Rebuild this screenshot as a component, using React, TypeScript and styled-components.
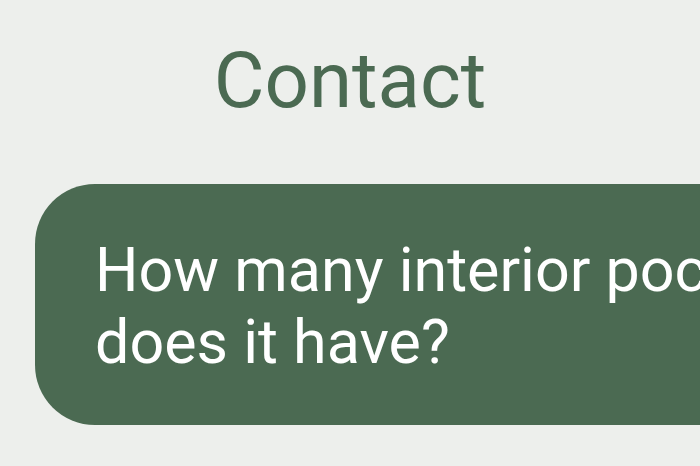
import React from 'react'
import styled, { createGlobalStyle } from 'styled-components'

const GlobalStyle = createGlobalStyle`
  html, body {
    margin: 0;
    padding: 0;
    background: #edefec;
    overflow: hidden;
  }
  body {
    font-family: Roboto, "Liberation Sans", sans-serif;
  }
`

const Page = styled.div`
  width: 700px;
  height: 466px;
  display: flex;
  flex-direction: column;
  overflow: hidden;
`

const Title = styled.h1`
  margin: 0;
  padding-top: 36px;
  text-align: center;
  font-size: 78px;
  font-weight: 400;
  line-height: 90px;
  color: #4b6a52;
`

const Bubble = styled.div`
  margin: 58px 0 0 35px;
  width: 900px;
  flex-shrink: 0;
  box-sizing: border-box;
  padding: 50px 60px 47px 60px;
  border-radius: 60px;
  background: #4b6a52;
  color: #ffffff;
  font-size: 61px;
  line-height: 72px;
`

export default function App() {
  return (
    <Page>
      <GlobalStyle />
      <Title>Contact</Title>
      <Bubble>How many interior pockets does it have?</Bubble>
    </Page>
  )
}
